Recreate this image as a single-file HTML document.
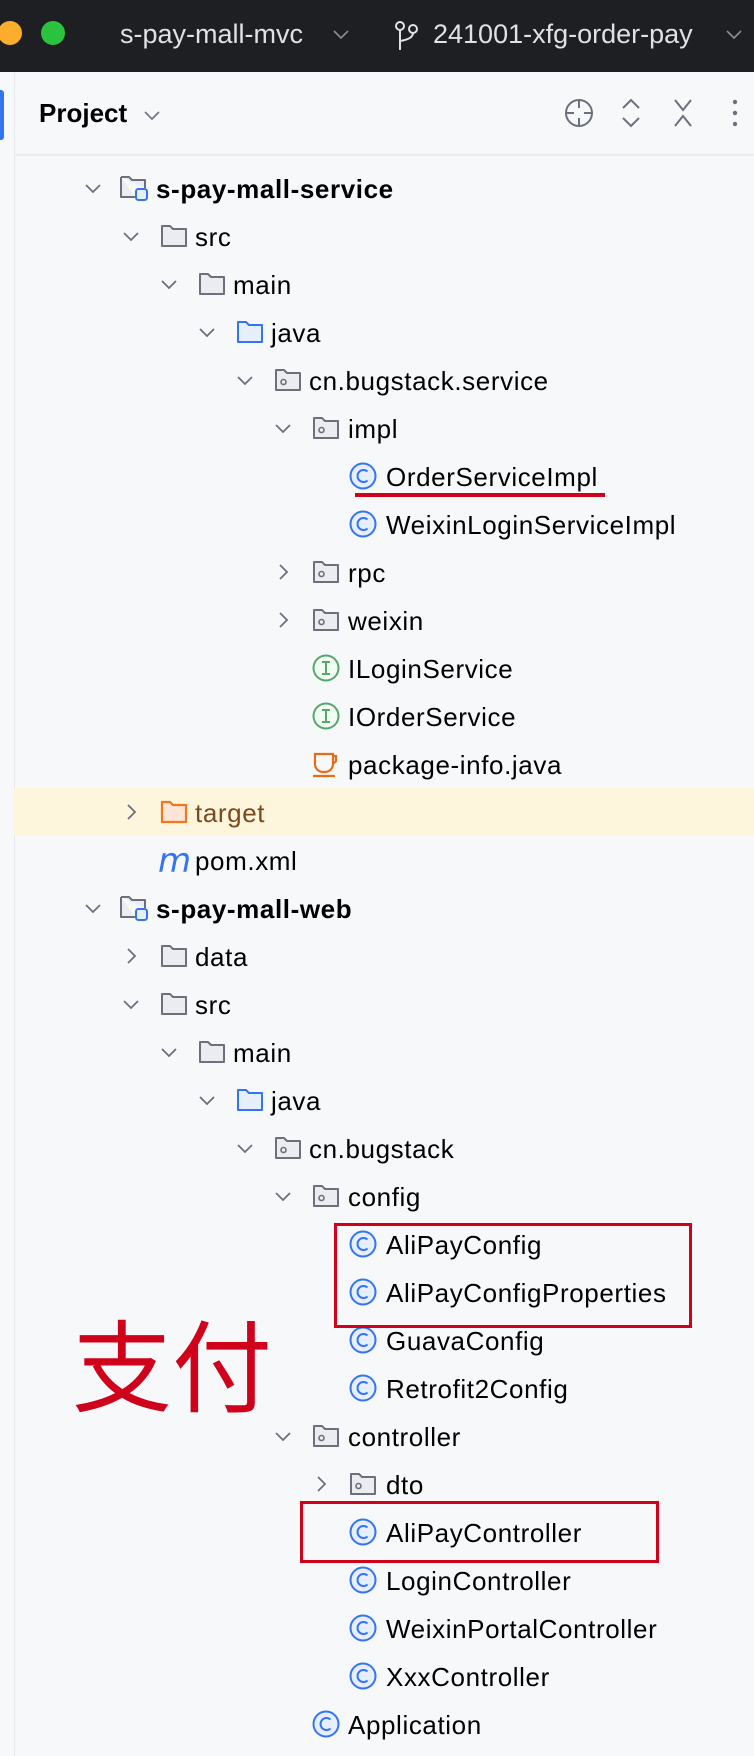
<!DOCTYPE html>
<html><head><meta charset="utf-8">
<style>
*{margin:0;padding:0;box-sizing:border-box}
body{width:754px;height:1756px;background:#f7f8fa;position:relative;overflow:hidden;font-family:"Liberation Sans","Noto Sans CJK SC",sans-serif;color:#000}
.top{position:absolute;left:0;top:0;width:754px;height:72px;background:#1e1f22;color:#dfe1e5;font-size:27px}
.top span{position:absolute;top:19px}
.r{position:absolute;left:0;height:48px;width:754px}
.r svg{position:absolute}
.r .t{position:absolute;top:10px;font-size:26px;letter-spacing:0.6px;white-space:nowrap}
.b{font-weight:bold}
.box{position:absolute;border:3.5px solid #d0021b}
</style></head><body>
<div class="top">
<div style="position:absolute;left:-2px;top:21px;width:24px;height:24px;border-radius:50%;background:#fdad2c"></div>
<div style="position:absolute;left:41px;top:21px;width:24px;height:24px;border-radius:50%;background:#2ac33f"></div>
<span style="left:120px">s-pay-mall-mvc</span>
<svg style="position:absolute;left:333px;top:30px" width="16" height="10"><path d="M1 1l7 7 7-7" fill="none" stroke="#8a8d94" stroke-width="1.6"/></svg>
<svg style="position:absolute;left:394px;top:20px" width="26" height="32"><g fill="none" stroke="#dfe1e5" stroke-width="2"><circle cx="6" cy="6" r="4"/><circle cx="19" cy="9" r="4"/><path d="M6 10v20M19 13q0 6-13 8"/></g></svg>
<span style="left:433px">241001-xfg-order-pay</span>
<svg style="position:absolute;left:726px;top:30px" width="16" height="10"><path d="M1 1l7 7 7-7" fill="none" stroke="#8a8d94" stroke-width="1.6"/></svg>
</div>
<div style="position:absolute;left:0;top:90px;width:4px;height:50px;background:#3574f0;border-radius:0 3px 3px 0"></div>
<div style="position:absolute;left:14px;top:72px;width:1px;height:1684px;background:#e6e7ea"></div>
<div style="position:absolute;left:39px;top:98px;font-size:26px;font-weight:bold">Project</div>
<svg style="position:absolute;left:144px;top:111px" width="16" height="10"><path d="M1 1l7 7 7-7" fill="none" stroke="#6c707e" stroke-width="1.6"/></svg>
<svg style="position:absolute;left:560px;top:95px" width="190" height="36"><g fill="none" stroke="#6c707e" stroke-width="2"><circle cx="19" cy="18" r="13"/><path d="M19 5v8M19 23v8M6 18h8M24 18h8"/><path d="M63 13l8-8 8 8M63 23l8 8 8-8"/><path d="M115 5l8 10 8-10M115 31l8-10 8 10"/></g><g fill="#6c707e"><circle cx="175" cy="7" r="2.2"/><circle cx="175" cy="18" r="2.2"/><circle cx="175" cy="29" r="2.2"/></g></svg>
<div style="position:absolute;left:14px;top:154px;width:740px;height:2px;background:#ebecf0"></div>
<div style="position:absolute;left:14px;top:788px;width:740px;height:48px;background:#fdf5dc"></div>

<svg width="0" height="0" style="position:absolute">
<defs>
<symbol id="co" viewBox="0 0 16 10"><path d="M1 1l7 7 7-7" fill="none" stroke="#6c707e" stroke-width="1.8"/></symbol>
<symbol id="cc" viewBox="0 0 10 16"><path d="M1 1l7 7-7 7" fill="none" stroke="#6c707e" stroke-width="1.8"/></symbol>
<symbol id="fo" viewBox="0 0 28 26"><path d="M2 3h8l3 3h13v17H2z" fill="#ebecf0" stroke="#6c707e" stroke-width="2" stroke-linejoin="round"/></symbol>
<symbol id="fb" viewBox="0 0 28 26"><path d="M2 3h8l3 3h13v17H2z" fill="#e7effd" stroke="#3574f0" stroke-width="2" stroke-linejoin="round"/></symbol>
<symbol id="fr" viewBox="0 0 28 26"><path d="M2 3h8l3 3h13v17H2z" fill="#fde6d8" stroke="#f2761c" stroke-width="2.2" stroke-linejoin="round"/></symbol>
<symbol id="pk" viewBox="0 0 28 26"><path d="M2 3h8l3 3h13v17H2z" fill="#ebecf0" stroke="#6c707e" stroke-width="2" stroke-linejoin="round"/><circle cx="9.5" cy="15" r="2.5" fill="none" stroke="#6c707e" stroke-width="1.6"/></symbol>
<symbol id="md" viewBox="0 0 30 28"><path d="M2 3h8l3 3h13v8M16 23H2V3" fill="#ebecf0" stroke="#6c707e" stroke-width="2" stroke-linejoin="round"/><rect x="17" y="15" width="11" height="11" rx="2.5" fill="#e7effd" stroke="#3574f0" stroke-width="2"/></symbol>
<symbol id="cl" viewBox="0 0 28 28"><circle cx="14" cy="14" r="12.5" fill="#e7effd" stroke="#3574f0" stroke-width="2"/><path d="M18.5 9.5A6 6 0 1 0 18.5 18.5" fill="none" stroke="#3574f0" stroke-width="2"/></symbol>
<symbol id="if" viewBox="0 0 28 28"><circle cx="14" cy="14" r="12.5" fill="#f2fcf3" stroke="#55a76a" stroke-width="2"/><path d="M10 8h8M10 20h8M14 8v12" fill="none" stroke="#55a76a" stroke-width="2"/></symbol>
<symbol id="jv" viewBox="0 0 28 28"><path d="M3 4h18v10a8 8 0 0 1-8 8h-2a8 8 0 0 1-8-8z M21 6h3v5l-3 3" fill="none" stroke="#e66d17" stroke-width="2.2"/><path d="M1 26h22" stroke="#e66d17" stroke-width="2.2"/></symbol>
</defs></svg>

<div class="r" style="top:164px"><svg style="left:85px;top:20px" width="16" height="10"><use href="#co"/></svg><svg style="left:119px;top:10px" width="30" height="28"><use href="#md"/></svg><div class="t b" style="left:156px">s-pay-mall-service</div></div>
<div class="r" style="top:212px"><svg style="left:123px;top:20px" width="16" height="10"><use href="#co"/></svg><svg style="left:160px;top:11px" width="28" height="26"><use href="#fo"/></svg><div class="t" style="left:195px">src</div></div>
<div class="r" style="top:260px"><svg style="left:161px;top:20px" width="16" height="10"><use href="#co"/></svg><svg style="left:198px;top:11px" width="28" height="26"><use href="#fo"/></svg><div class="t" style="left:233px">main</div></div>
<div class="r" style="top:308px"><svg style="left:199px;top:20px" width="16" height="10"><use href="#co"/></svg><svg style="left:236px;top:11px" width="28" height="26"><use href="#fb"/></svg><div class="t" style="left:271px">java</div></div>
<div class="r" style="top:356px"><svg style="left:237px;top:20px" width="16" height="10"><use href="#co"/></svg><svg style="left:274px;top:11px" width="28" height="26"><use href="#pk"/></svg><div class="t" style="left:309px">cn.bugstack.service</div></div>
<div class="r" style="top:404px"><svg style="left:275px;top:20px" width="16" height="10"><use href="#co"/></svg><svg style="left:312px;top:11px" width="28" height="26"><use href="#pk"/></svg><div class="t" style="left:348px">impl</div></div>
<div class="r" style="top:452px"><svg style="left:349px;top:10px" width="28" height="28"><use href="#cl"/></svg><div class="t" style="left:386px">OrderServiceImpl</div></div>
<div class="r" style="top:500px"><svg style="left:349px;top:10px" width="28" height="28"><use href="#cl"/></svg><div class="t" style="left:386px">WeixinLoginServiceImpl</div></div>
<div class="r" style="top:548px"><svg style="left:279px;top:16px" width="10" height="16"><use href="#cc"/></svg><svg style="left:312px;top:11px" width="28" height="26"><use href="#pk"/></svg><div class="t" style="left:348px">rpc</div></div>
<div class="r" style="top:596px"><svg style="left:279px;top:16px" width="10" height="16"><use href="#cc"/></svg><svg style="left:312px;top:11px" width="28" height="26"><use href="#pk"/></svg><div class="t" style="left:348px">weixin</div></div>
<div class="r" style="top:644px"><svg style="left:312px;top:10px" width="28" height="28"><use href="#if"/></svg><div class="t" style="left:348px">ILoginService</div></div>
<div class="r" style="top:692px"><svg style="left:312px;top:10px" width="28" height="28"><use href="#if"/></svg><div class="t" style="left:348px">IOrderService</div></div>
<div class="r" style="top:740px"><svg style="left:312px;top:10px" width="28" height="28"><use href="#jv"/></svg><div class="t" style="left:348px">package-info.java</div></div>
<div class="r" style="top:788px"><svg style="left:127px;top:16px" width="10" height="16"><use href="#cc"/></svg><svg style="left:160px;top:11px" width="28" height="26"><use href="#fr"/></svg><div class="t" style="left:195px;color:#7a4a1e">target</div></div>
<div class="r" style="top:836px"><div class="t" style="left:158px;top:5px;font-size:34px;font-style:italic;color:#3574f0;font-family:'DejaVu Sans',sans-serif">m</div><div class="t" style="left:195px">pom.xml</div></div>
<div class="r" style="top:884px"><svg style="left:85px;top:20px" width="16" height="10"><use href="#co"/></svg><svg style="left:119px;top:10px" width="30" height="28"><use href="#md"/></svg><div class="t b" style="left:156px">s-pay-mall-web</div></div>
<div class="r" style="top:932px"><svg style="left:127px;top:16px" width="10" height="16"><use href="#cc"/></svg><svg style="left:160px;top:11px" width="28" height="26"><use href="#fo"/></svg><div class="t" style="left:195px">data</div></div>
<div class="r" style="top:980px"><svg style="left:123px;top:20px" width="16" height="10"><use href="#co"/></svg><svg style="left:160px;top:11px" width="28" height="26"><use href="#fo"/></svg><div class="t" style="left:195px">src</div></div>
<div class="r" style="top:1028px"><svg style="left:161px;top:20px" width="16" height="10"><use href="#co"/></svg><svg style="left:198px;top:11px" width="28" height="26"><use href="#fo"/></svg><div class="t" style="left:233px">main</div></div>
<div class="r" style="top:1076px"><svg style="left:199px;top:20px" width="16" height="10"><use href="#co"/></svg><svg style="left:236px;top:11px" width="28" height="26"><use href="#fb"/></svg><div class="t" style="left:271px">java</div></div>
<div class="r" style="top:1124px"><svg style="left:237px;top:20px" width="16" height="10"><use href="#co"/></svg><svg style="left:274px;top:11px" width="28" height="26"><use href="#pk"/></svg><div class="t" style="left:309px">cn.bugstack</div></div>
<div class="r" style="top:1172px"><svg style="left:275px;top:20px" width="16" height="10"><use href="#co"/></svg><svg style="left:312px;top:11px" width="28" height="26"><use href="#pk"/></svg><div class="t" style="left:348px">config</div></div>
<div class="r" style="top:1220px"><svg style="left:349px;top:10px" width="28" height="28"><use href="#cl"/></svg><div class="t" style="left:386px">AliPayConfig</div></div>
<div class="r" style="top:1268px"><svg style="left:349px;top:10px" width="28" height="28"><use href="#cl"/></svg><div class="t" style="left:386px">AliPayConfigProperties</div></div>
<div class="r" style="top:1316px"><svg style="left:349px;top:10px" width="28" height="28"><use href="#cl"/></svg><div class="t" style="left:386px">GuavaConfig</div></div>
<div class="r" style="top:1364px"><svg style="left:349px;top:10px" width="28" height="28"><use href="#cl"/></svg><div class="t" style="left:386px">Retrofit2Config</div></div>
<div class="r" style="top:1412px"><svg style="left:275px;top:20px" width="16" height="10"><use href="#co"/></svg><svg style="left:312px;top:11px" width="28" height="26"><use href="#pk"/></svg><div class="t" style="left:348px">controller</div></div>
<div class="r" style="top:1460px"><svg style="left:317px;top:16px" width="10" height="16"><use href="#cc"/></svg><svg style="left:349px;top:11px" width="28" height="26"><use href="#pk"/></svg><div class="t" style="left:386px">dto</div></div>
<div class="r" style="top:1508px"><svg style="left:349px;top:10px" width="28" height="28"><use href="#cl"/></svg><div class="t" style="left:386px">AliPayController</div></div>
<div class="r" style="top:1556px"><svg style="left:349px;top:10px" width="28" height="28"><use href="#cl"/></svg><div class="t" style="left:386px">LoginController</div></div>
<div class="r" style="top:1604px"><svg style="left:349px;top:10px" width="28" height="28"><use href="#cl"/></svg><div class="t" style="left:386px">WeixinPortalController</div></div>
<div class="r" style="top:1652px"><svg style="left:349px;top:10px" width="28" height="28"><use href="#cl"/></svg><div class="t" style="left:386px">XxxController</div></div>
<div class="r" style="top:1700px"><svg style="left:312px;top:10px" width="28" height="28"><use href="#cl"/></svg><div class="t" style="left:348px">Application</div></div>

<div style="position:absolute;left:355px;top:493px;width:250px;height:4px;background:#d0021b"></div>
<div class="box" style="left:334px;top:1223px;width:358px;height:105px"></div>
<div class="box" style="left:300px;top:1501px;width:359px;height:62px"></div>
<div style="position:absolute;left:72px;top:1306px;font-size:100px;line-height:110px;color:#d0021b;font-family:'Noto Sans CJK SC',sans-serif">支付</div>
</body></html>
